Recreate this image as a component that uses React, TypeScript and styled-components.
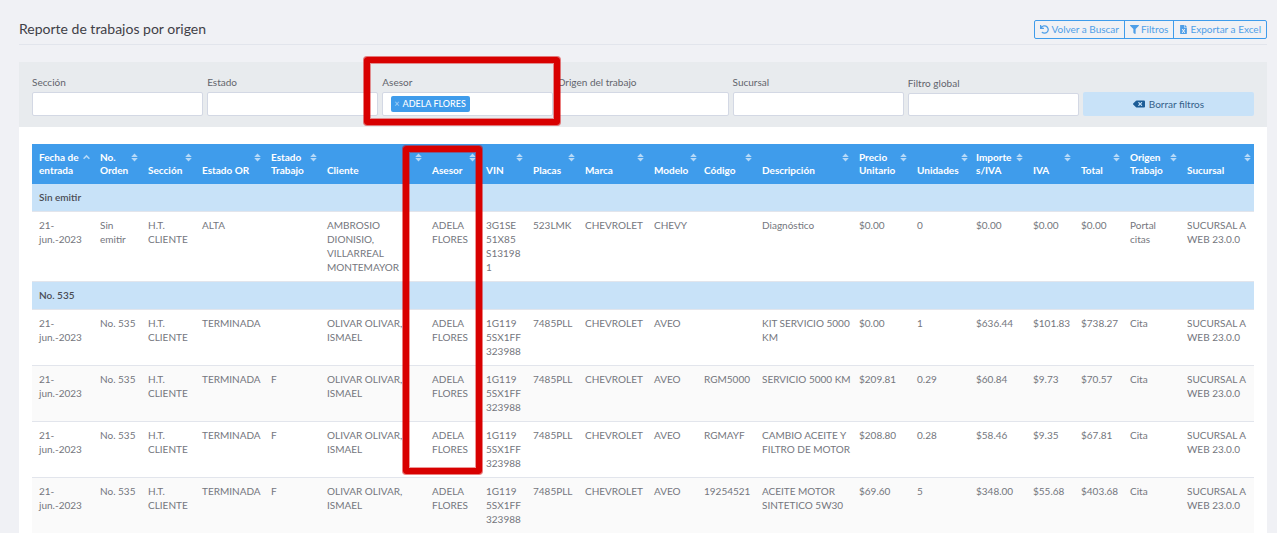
import React from 'react';
import styled, { createGlobalStyle } from 'styled-components';
import { FaBackspace, FaFileExcel, FaFilter, FaUndo } from 'react-icons/fa';

const GlobalStyle = createGlobalStyle`
  *, *::before, *::after { box-sizing: border-box; }
  body {
    margin: 0;
    background: #f0f1f5;
    color: #62646c;
    font-family: Lato, "Liberation Sans", sans-serif;
    font-size: 10px;
    line-height: 14px;
  }
  button, input { font: inherit; color: inherit; }
`;

const Page = styled.main`
  padding: 14px 10px 0 19px;
`;

const PageHeader = styled.header`
  display: flex;
  align-items: center;
  justify-content: space-between;
  height: 31px;
  border-bottom: 1px solid #e2e5ec;
`;

const Title = styled.h1`
  margin: 0;
  font-size: 14px;
  line-height: 20px;
  font-weight: 400;
  color: #3f4047;
`;

const ButtonGroup = styled.div`
  display: flex;
  padding-right: 6px;
`;

const OutlineButton = styled.button`
  display: flex;
  align-items: center;
  gap: 2px;
  height: 19px;
  padding: 0 5px;
  border: 1px solid #3f9ceb;
  background: transparent;
  color: #4f9fe8;
  white-space: nowrap;
  cursor: pointer;

  & + & { margin-left: -1px; }
  &:first-child { border-radius: 2px 0 0 2px; }
  &:last-child { border-radius: 0 2px 2px 0; }
`;

const HeaderActions = styled(ButtonGroup)`
  padding-right: 0;
`;

const Panel = styled.section`
  margin-top: 17px;
  background: #fff;
`;

const Filters = styled.form`
  display: grid;
  grid-template-columns: repeat(7, minmax(0, 1fr));
  gap: 4px;
  align-items: end;
  padding: 13px 13px 11px;
  background: #e8ebee;
`;

const Field = styled.div`
  position: relative;
  display: flex;
  flex-direction: column;
  gap: 3px;
`;

const InputBox = styled.div<{ $compact?: boolean }>`
  display: flex;
  align-items: center;
  height: ${(p) => (p.$compact ? 23 : 24)}px;
  padding: 0 8px;
  border: 1px solid #d3d8e4;
  border-radius: 2px;
  background: #fff;
`;

const TextInput = styled.input`
  flex: 1;
  min-width: 0;
  padding: 0;
  border: 0;
  outline: 0;
  background: transparent;
`;

const Tag = styled.span`
  display: flex;
  align-items: center;
  gap: 3px;
  height: 16px;
  padding: 0 4px 0 3px;
  border-radius: 2px;
  background: #3f9ceb;
  color: #fff;
  font-size: 9px;
  font-weight: 500;
  white-space: nowrap;
`;

const TagRemove = styled.button`
  padding: 0;
  border: 0;
  background: none;
  color: #a9d2f6;
  cursor: pointer;
`;

const ClearButton = styled.button`
  display: flex;
  align-items: center;
  justify-content: center;
  gap: 4px;
  height: 24px;
  padding: 0;
  border: 0;
  border-radius: 2px;
  background: #c8e2f8;
  color: #34618a;
  cursor: pointer;

  svg { color: #1c5c96; }
`;

const TableWrap = styled.div`
  padding: 17px 13px 0;
`;

const Table = styled.table`
  width: 100%;
  table-layout: fixed;
  border-collapse: separate;
  border-spacing: 0;
`;

const HeadCell = styled.th`
  position: relative;
  padding: 7px 3px 7px 7px;
  background: #3f9ceb;
  color: #fff;
  text-align: left;
  line-height: 13px;
`;

const SortButton = styled.button`
  display: flex;
  justify-content: space-between;
  gap: 2px;
  width: 100%;
  height: 26px;
  padding: 0;
  border: 0;
  background: none;
  font-weight: 700;
  line-height: 13px;
  text-align: left;
  cursor: pointer;

  span { align-self: flex-end; }
  svg { flex: none; margin-top: 2px; }
`;

const GroupCell = styled.th`
  padding: 6px 7px 7px;
  border-top: 1px solid #e2e5ec;
  background: #c8e2f8;
  color: #4a4c55;
  text-align: left;
  font-weight: 600;

  thead + tbody tr:first-child > & { border-top: 0; }
`;

const Row = styled.tr<{ $striped?: boolean }>`
  background: ${(p) => (p.$striped ? '#fafafa' : '#fff')};
`;

const Cell = styled.td`
  padding: 6px 0 7px 7px;
  border-top: 1px solid #e2e5ec;
  color: #74767d;
  vertical-align: top;
  white-space: pre-line;
`;

const Highlight = styled.div`
  position: absolute;
  z-index: 2;
  border: 6px solid #d80000;
  border-radius: 3px;
  box-shadow: 0 0 0 1px rgba(216, 0, 0, 0.5), inset 0 0 0 1px rgba(216, 0, 0, 0.4);
  pointer-events: none;
`;

const FieldHighlight = styled(Highlight)`
  inset: -18px -7px -9px -18px;
`;

const ColumnHighlight = styled(Highlight)`
  top: 2px;
  left: -22px;
  right: -3px;
  height: 328px;
`;

function SortIcon({ ascending }: { ascending?: boolean }) {
  return (
    <svg width="7" height="9" viewBox="0 0 7 9" fill="#b5d9f8" aria-hidden="true">
      {ascending ? (
        <path d="M.6 5.8 3.5 2.9l2.9 2.9" fill="none" stroke="#b5d9f8" strokeWidth="1.5" />
      ) : (
        <path d="M3.5.6 6.8 4H.2zM.2 5h6.6L3.5 8.4z" />
      )}
    </svg>
  );
}

const columns: [string, number][] = [
  ['Fecha de entrada', 61],
  ['No. Orden', 48],
  ['Sección', 54],
  ['Estado OR', 69],
  ['Estado Trabajo', 56],
  ['Cliente', 105],
  ['Asesor', 54],
  ['VIN', 47],
  ['Placas', 52],
  ['Marca', 69],
  ['Modelo', 50],
  ['Código', 58],
  ['Descripción', 97],
  ['Precio Unitario', 58],
  ['Unidades', 59],
  ['Importe s/IVA', 57],
  ['IVA', 48],
  ['Total', 49],
  ['Origen Trabajo', 57],
  ['Sucursal', 74],
];

const order535 = (
  status: string, code: string, description: string,
  price: string, units: string, amount: string, tax: string, total: string,
) => [
  '21-jun.-2023', 'No. 535', 'H.T. CLIENTE', 'TERMINADA', status, 'OLIVAR OLIVAR, ISMAEL',
  'ADELA FLORES', '1G119\n5SX1FF\n323988', '7485PLL', 'CHEVROLET', 'AVEO', code, description,
  price, units, amount, tax, total, 'Cita', 'SUCURSAL A WEB 23.0.0',
];

const groups = [
  {
    name: 'Sin emitir',
    rows: [[
      '21-jun.-2023', 'Sin\nemitir', 'H.T. CLIENTE', 'ALTA', '',
      'AMBROSIO DIONISIO, VILLARREAL MONTEMAYOR', 'ADELA FLORES', '3G1SE\n51X85\nS13198\n1',
      '523LMK', 'CHEVROLET', 'CHEVY', '', 'Diagnóstico', '$0.00', '0', '$0.00', '$0.00', '$0.00',
      'Portal\ncitas', 'SUCURSAL A WEB 23.0.0',
    ]],
  },
  {
    name: 'No. 535',
    rows: [
      order535('', '', 'KIT SERVICIO 5000 KM', '$0.00', '1', '$636.44', '$101.83', '$738.27'),
      order535('F', 'RGM5000', 'SERVICIO 5000 KM', '$209.81', '0.29', '$60.84', '$9.73', '$70.57'),
      order535('F', 'RGMAYF', 'CAMBIO ACEITE Y FILTRO DE MOTOR', '$208.80', '0.28', '$58.46', '$9.35', '$67.81'),
      order535('F', '19254521', 'ACEITE MOTOR SINTETICO 5W30', '$69.60', '5', '$348.00', '$55.68', '$403.68'),
    ],
  },
];

const filters = [
  { id: 'seccion', label: 'Sección' },
  { id: 'estado', label: 'Estado' },
  { id: 'asesor', label: 'Asesor', tag: 'ADELA FLORES' },
  { id: 'origen', label: 'Origen del trabajo' },
  { id: 'sucursal', label: 'Sucursal' },
  { id: 'global', label: 'Filtro global', compact: true },
];

export default function App() {
  return (
    <Page>
      <GlobalStyle />
      <PageHeader>
        <Title>Reporte de trabajos por origen</Title>
        <HeaderActions>
          <OutlineButton type="button"><FaUndo size={9} />Volver a Buscar</OutlineButton>
          <OutlineButton type="button"><FaFilter size={9} />Filtros</OutlineButton>
          <OutlineButton type="button"><FaFileExcel size={9} />Exportar a Excel</OutlineButton>
        </HeaderActions>
      </PageHeader>
      <Panel>
        <Filters>
          {filters.map((f) => (
            <Field key={f.id}>
              <label htmlFor={f.id}>{f.label}</label>
              <InputBox $compact={f.compact}>
                {f.tag && <Tag><TagRemove type="button">×</TagRemove>{f.tag}</Tag>}
                <TextInput id={f.id} type="text" />
              </InputBox>
              {f.tag && <FieldHighlight />}
            </Field>
          ))}
          <ClearButton type="button"><FaBackspace size={12} />Borrar filtros</ClearButton>
        </Filters>
        <TableWrap>
          <Table>
            <colgroup>
              {columns.map(([name, width]) => <col key={name} width={width} />)}
            </colgroup>
            <thead>
              <tr>
                {columns.map(([name], i) => (
                  <HeadCell key={name} scope="col" aria-sort={i === 0 ? 'ascending' : 'none'}>
                    <SortButton type="button">
                      <span>{name}</span>
                      <SortIcon ascending={i === 0} />
                    </SortButton>
                    {name === 'Asesor' && <ColumnHighlight />}
                  </HeadCell>
                ))}
              </tr>
            </thead>
            {groups.map((group) => (
              <tbody key={group.name}>
                <tr><GroupCell colSpan={columns.length} scope="rowgroup">{group.name}</GroupCell></tr>
                {group.rows.map((row, r) => (
                  <Row key={r} $striped={r % 2 === 1}>
                    {row.map((value, c) => <Cell key={c}>{value}</Cell>)}
                  </Row>
                ))}
              </tbody>
            ))}
          </Table>
        </TableWrap>
      </Panel>
    </Page>
  );
}
